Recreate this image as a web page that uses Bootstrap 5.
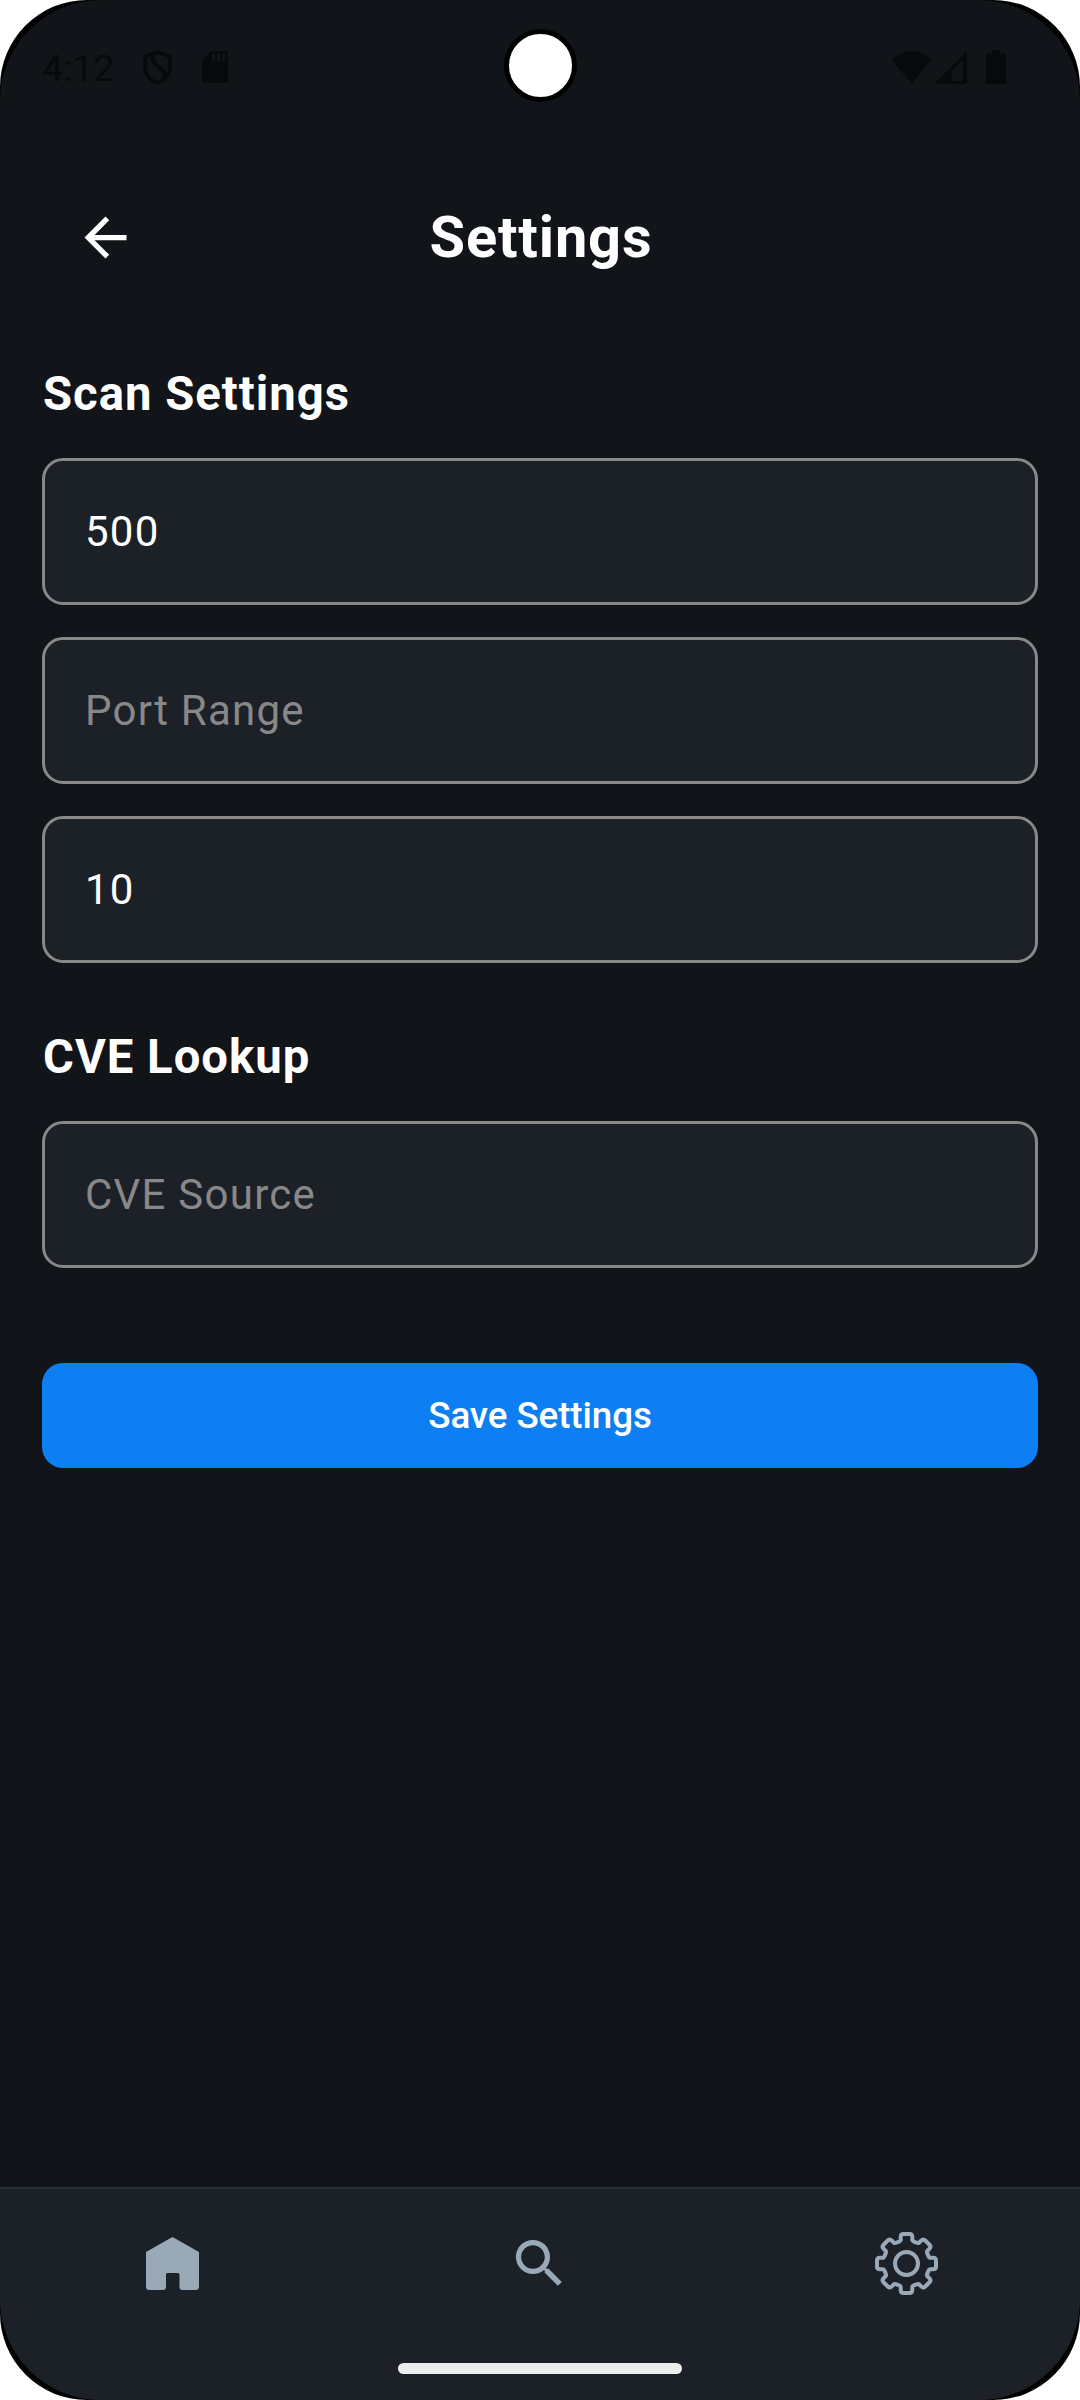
<!DOCTYPE html>
<html lang="en" data-bs-theme="dark">
<head>
<meta charset="utf-8">
<meta name="viewport" content="width=device-width, initial-scale=1">
<title>Settings</title>
<link href="https://cdn.jsdelivr.net/npm/bootstrap@5.3.0/dist/css/bootstrap.min.css" rel="stylesheet">
<style>
  html, body { height: 2400px; overflow: hidden; }
  body { background: #fff; font-family: Roboto, "Liberation Sans", sans-serif; color: #fff; }
  svg { display: block; flex: none; }
  .phone { width: 1080px; height: 2400px; border-radius: 87px; background: #000; }
  .phone-screen { border-radius: 101px; background: #111418; }
  .status { height: 131px; padding: 3px 74px 0 42px; color: #07090b; }
  .clock { font-size: 37.5px; line-height: 44px; width: 101px; padding-top: 1px; }
  .sd { margin-left: 30px; }
  .signal { margin-left: 3px; }
  .battery { margin-left: 19px; }
  .camera { top: 29px; left: 504px; width: 73px; height: 73px; border: 5px solid #000; }
  .top-bar { height: 212px; padding: 0 72px 0 74px; }
  .top-bar-end { width: 63px; }
  .page-title { font-size: 57.75px; font-weight: 700; line-height: 74px; letter-spacing: .85px; }
  .settings-form { padding: 19px 42px 0; }
  .section-title { font-size: 47.25px; line-height: 64px; font-weight: 700; letter-spacing: 1px; margin-bottom: 32px; padding-left: 1px; }
  .field.form-control { height: 147px; padding: 0 40px; border: 3px solid #888; border-radius: 21px; background: #1c2127; color: #fff; font-size: 42px; letter-spacing: 1.25px; }
  .field::placeholder { color: #888; opacity: 1; }
  .field-stack { gap: 32px; }
  .scan-group { margin-bottom: 62px; }
  .save.btn { height: 105px; margin-top: 95px; padding: 0; border: 0; border-radius: 21px; background: #0d7ff2; font-size: 36.75px; font-weight: 500; letter-spacing: -.08px; }
  .tabs { height: 213px; padding: 43px 142px 0 141px; border-top: 2px solid #283039; background: #1c2127; color: #9aa9b8; }
  .pill { left: 398px; top: 2363px; width: 284px; height: 11px; background: #eceeed; }
</style>
</head>
<body>
<div class="phone position-relative overflow-hidden">
  <div class="phone-screen h-100 d-flex flex-column overflow-hidden">
    <div class="status d-flex align-items-center">
      <span class="clock">4:12</span>
      <svg width="29" height="35" viewBox="0 0 29 35" fill="none" stroke="currentColor" stroke-width="3.4"><path d="M14.500 2 2 6.400V17c0 7.600 5.200 13.400 12.500 16C21.800 30.400 27 24.600 27 17V6.400z" stroke-linejoin="round"/><path d="M10 4c-1 9 2 10 7 14s6 7 3.500 12" stroke-width="4"/></svg>
      <svg class="sd" width="26" height="32" viewBox="0 0 26 32" fill="currentColor"><path d="M9.500 0H24a2 2 0 0 1 2 2v28a2 2 0 0 1-2 2H2a2 2 0 0 1-2-2V9.500z"/><path fill="#111418" d="M10 3h3v7h-3zM15 3h3v7h-3zM20 3h3v7h-3z"/></svg>
      <svg class="ms-auto" width="39" height="33" viewBox="0 0 39 33" fill="currentColor"><path d="M0 9Q8.500 0 19.500 0T39 9L19.500 32.500z"/></svg>
      <svg class="signal" width="33" height="33" viewBox="0 0 33 33" fill="currentColor"><path d="M0 33 33 0v33z"/><path fill="#111418" d="M17.500 20 29 9v21H17.500z"/></svg>
      <svg class="battery" width="20" height="34" viewBox="0 0 20 34" fill="currentColor"><path d="M6 0h8v3h4a2 2 0 0 1 2 2v27a2 2 0 0 1-2 2H2a2 2 0 0 1-2-2V5a2 2 0 0 1 2-2h4z"/></svg>
    </div>
    <header class="top-bar d-flex align-items-center justify-content-between">
      <svg width="63" height="63" viewBox="0 0 24 24" fill="#fff"><path d="M20 11H7.830l5.590-5.590L12 4l-8 8 8 8 1.410-1.410L7.830 13H20z"/></svg>
      <h1 class="page-title m-0">Settings</h1>
      <span class="top-bar-end"></span>
    </header>
    <main class="settings-form flex-grow-1">
      <section class="scan-group">
        <h2 class="section-title mt-0">Scan Settings</h2>
        <div class="field-stack d-flex flex-column">
          <input class="field form-control" type="text" value="500" aria-label="Timeout">
          <input class="field form-control" type="text" placeholder="Port Range">
          <input class="field form-control" type="text" value="10" aria-label="Threads">
        </div>
      </section>
      <section>
        <h2 class="section-title mt-0">CVE Lookup</h2>
        <input class="field form-control" type="text" placeholder="CVE Source">
      </section>
      <button class="save btn btn-primary w-100" type="button">Save Settings</button>
    </main>
    <nav class="tabs d-flex align-items-start justify-content-between">
      <svg width="63" height="63" viewBox="0 0 63 63" fill="currentColor"><path d="M31.500 5 58 20v34.500a3.500 3.500 0 0 1-3.500 3.500H41.500a3 3 0 0 1-3-3V42.500a1.500 1.500 0 0 0-1.500-1.500H26.500a1.500 1.500 0 0 0-1.500 1.500V55a3 3 0 0 1-3 3H8.500A3.500 3.500 0 0 1 5 54.500V20z"/></svg>
      <svg width="63" height="63" viewBox="0 0 24 24" fill="currentColor"><path d="M15.500 14h-.790l-.280-.270A6.471 6.471 0 0 0 16 9.500 6.500 6.500 0 1 0 9.500 16c1.610 0 3.090-.590 4.230-1.570l.270.280v.790l5 4.990L20.490 19zm-6 0C7.010 14 5 11.990 5 9.500S7.010 5 9.500 5 14 7.010 14 9.500 11.990 14 9.500 14z"/></svg>
      <svg width="63" height="63" viewBox="-31.500 -31.500 63 63" fill="none" stroke="currentColor" stroke-width="4" stroke-linejoin="round">
        <defs><path id="tooth" d="M-9.200-21.200C-7-22-6-22.200-5.800-23.500V-26.500Q-5.800-29.500-3-29.500H3Q5.800-29.500 5.800-26.500V-23.500C6-22.200 7-22 9.200-21.200"/></defs>
        <use href="#tooth"/><use href="#tooth" transform="rotate(45)"/><use href="#tooth" transform="rotate(90)"/><use href="#tooth" transform="rotate(135)"/><use href="#tooth" transform="rotate(180)"/><use href="#tooth" transform="rotate(225)"/><use href="#tooth" transform="rotate(270)"/><use href="#tooth" transform="rotate(315)"/>
        <circle r="11.500"/>
      </svg>
    </nav>
  </div>
  <div class="camera position-absolute rounded-circle bg-white"></div>
  <div class="pill position-absolute rounded-pill"></div>
</div>
<script src="https://cdn.jsdelivr.net/npm/bootstrap@5.3.0/dist/js/bootstrap.bundle.min.js"></script>
</body>
</html>
